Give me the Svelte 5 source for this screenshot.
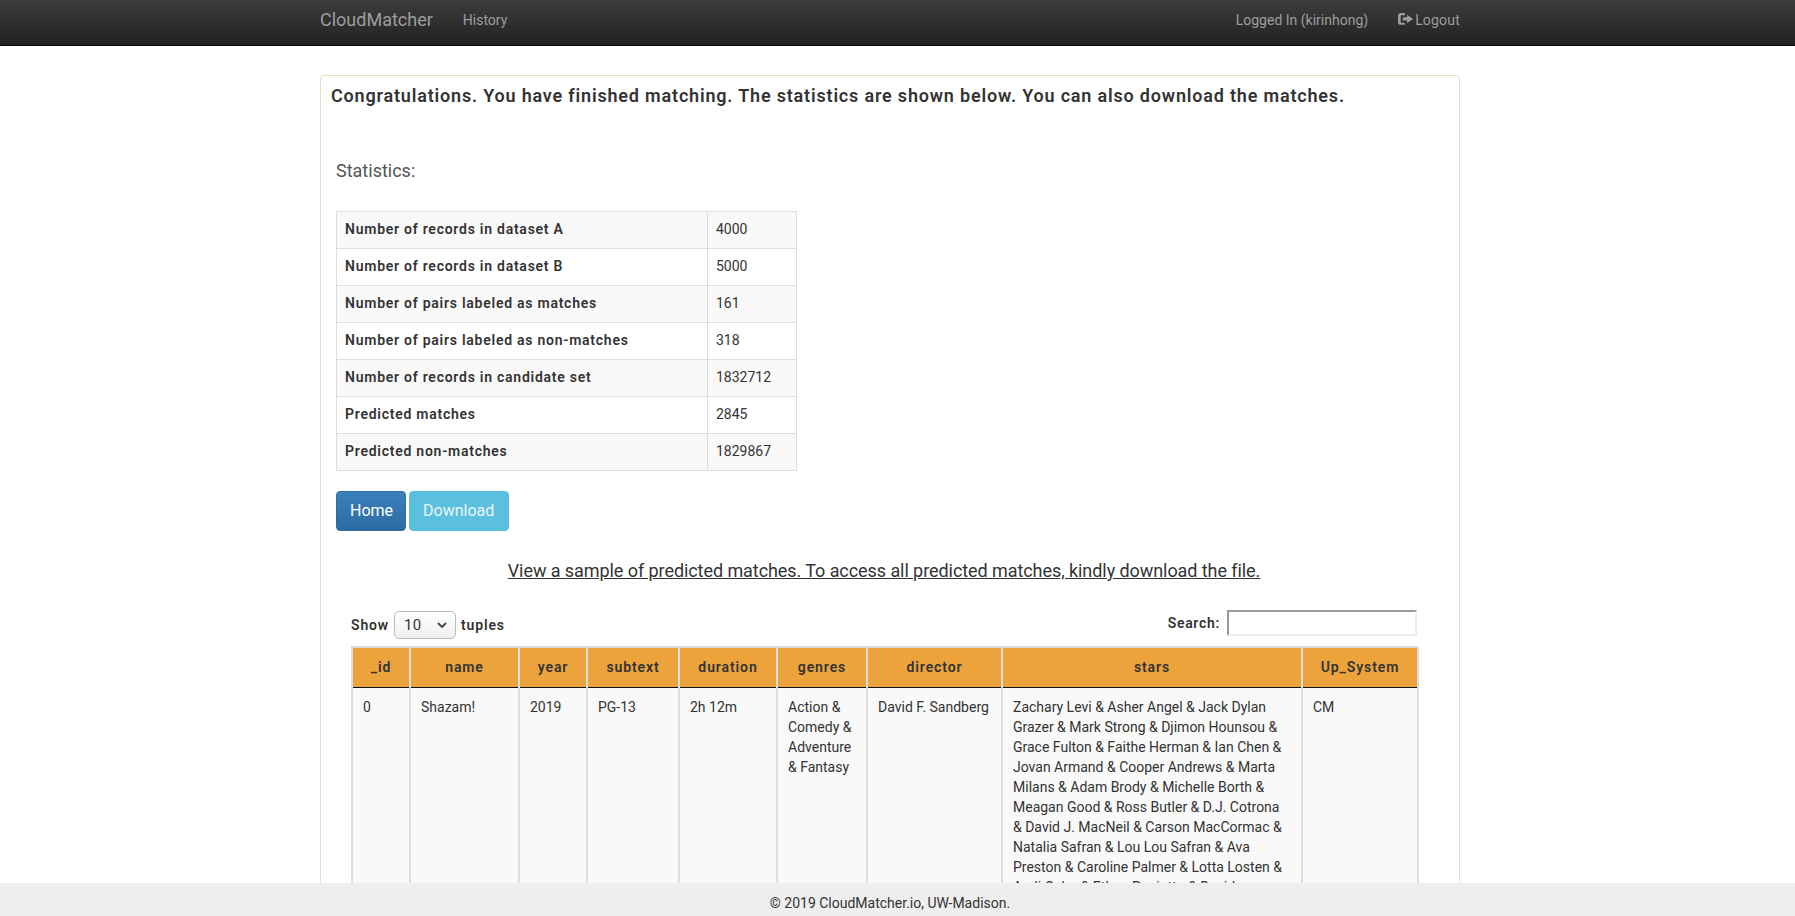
<script>
  const stats = [
    ['Number of records in dataset A', '4000'],
    ['Number of records in dataset B', '5000'],
    ['Number of pairs labeled as matches', '161'],
    ['Number of pairs labeled as non-matches', '318'],
    ['Number of records in candidate set', '1832712'],
    ['Predicted matches', '2845'],
    ['Predicted non-matches', '1829867']
  ];
  const cols = [
    ['_id', 58], ['name', 109], ['year', 68], ['subtext', 92], ['duration', 98],
    ['genres', 90], ['director', 135], ['stars', 300], ['Up_System', 116]
  ];
  const row = ['0', 'Shazam!', '2019', 'PG-13', '2h 12m', 'Action & Comedy & Adventure & Fantasy', 'David F. Sandberg',
    'Zachary Levi & Asher Angel & Jack Dylan Grazer & Mark Strong & Djimon Hounsou & Grace Fulton & Faithe Herman & Ian Chen & Jovan Armand & Cooper Andrews & Marta Milans & Adam Brody & Michelle Borth & Meagan Good & Ross Butler & D.J. Cotrona & David J. MacNeil & Carson MacCormac & Natalia Safran & Lou Lou Safran & Ava Preston & Caroline Palmer & Lotta Losten & Andi Osho & Ethan Pugiotto & David Kohlsmith',
    'CM'];
</script>

<div class="page">
  <nav class="navbar">
    <div class="nav-inner">
      <a class="brand" href="#top">CloudMatcher</a>
      <a class="link history" href="#top">History</a>
      <span class="spacer"></span>
      <a class="link user" href="#top">Logged In (kirinhong)</a>
      <a class="link logout" href="#top">
        <svg class="icon" viewBox="0 0 14 14" aria-hidden="true">
          <path fill="currentColor" d="M2.500 1H6.500V3H3.300C2.800 3 2.500 3.300 2.500 3.800V9.200C2.500 9.700 2.800 10 3.300 10H6.500V12H2.500C1.100 12 0 10.900 0 9.500V3.500C0 2.100 1.100 1 2.500 1Z"/>
          <path fill="currentColor" d="M4.500 5H8.500V2.500L14 6.500L8.500 10.500V8H4.500Z"/>
        </svg>Logout
      </a>
    </div>
  </nav>

  <main class="main">
    <div class="panel">
      <h1 class="title">Congratulations. You have finished matching. The statistics are shown below. You can also download the matches.</h1>
      <div class="body">
        <h2 class="sub">Statistics:</h2>
        <table class="stats">
          <tbody>
            {#each stats as s, i}
              <tr class:odd={i % 2 === 0}>
                <th>{s[0]}</th>
                <td>{s[1]}</td>
              </tr>
            {/each}
          </tbody>
        </table>
        <div class="buttons">
          <button class="btn primary">Home</button>
          <button class="btn info">Download</button>
        </div>
        <p class="sample"><u>View a sample of predicted matches. To access all predicted matches, kindly download the file.</u></p>
        <div class="tools">
          <label class="show">Show
            <select class="select"><option>10</option><option>25</option><option>50</option></select>
            tuples</label>
          <label class="search">Search:<input class="input" type="text" /></label>
        </div>
        <table class="data">
          <colgroup>
            {#each cols as c}<col style="width:{c[1]}px" />{/each}
          </colgroup>
          <thead>
            <tr>{#each cols as c}<th>{c[0]}</th>{/each}</tr>
          </thead>
          <tbody>
            <tr>{#each row as v}<td>{v}</td>{/each}</tr>
          </tbody>
        </table>
      </div>
    </div>
  </main>

  <footer class="footer">© 2019 CloudMatcher.io, UW-Madison.</footer>
</div>

<style>
  :global(html), :global(body) { margin: 0; height: 100%; overflow: hidden; }
  .page {
    height: 916px;
    display: flex;
    flex-direction: column;
    font-family: Roboto, "Liberation Sans", sans-serif;
    font-size: 14px;
    line-height: 20px;
    color: #333;
    background: #fff;
    overflow: hidden;
  }
  .navbar {
    flex: none;
    height: 45px;
    background: linear-gradient(to bottom, #3c3c3c, #222);
    border-bottom: 1px solid #080808;
  }
  .nav-inner {
    width: 1140px;
    margin-left: 320px;
    height: 40px;
    display: flex;
    align-items: center;
  }
  .brand { font-size: 18px; color: #9d9d9d; text-decoration: none; }
  .link { color: #9d9d9d; text-decoration: none; }
  .history { margin-left: 30px; }
  .spacer { flex: 1; }
  .user { margin-right: 2px; }
  .logout { margin-left: 28px; display: flex; align-items: center; letter-spacing: 0.2px; }
  .icon { width: 15px; height: 15px; margin-right: 2px; margin-top: -2px; }
  .main { flex: 1; min-height: 0; overflow: hidden; padding: 29px 0 0 320px; }
  .panel {
    width: 1138px;
    border: 1px solid #d6e9c6;
    border-radius: 4px;
    padding-bottom: 40px;
  }
  .title {
    margin: 0;
    padding: 10px 10px 0;
    font-size: 18px;
    line-height: 20px;
    font-weight: 600;
    letter-spacing: 0.815px;
  }
  .body { padding: 0 15px; }
  .sub {
    margin: 55px 0 0;
    font-size: 18px;
    line-height: 20px;
    font-weight: 400;
    color: #555;
  }
  .stats {
    margin-top: 30px;
    border-collapse: collapse;
    width: 461px;
    table-layout: fixed;
    background: #fff;
  }
  .stats tr.odd { background: #f9f9f9; }
  .stats th, .stats td {
    border: 1px solid #ddd;
    padding: 7px 8px 9px;
    text-align: left;
    height: 20px;
  }
  .stats th { width: 354px; font-weight: 600; letter-spacing: 0.75px; }
  .buttons { margin-top: 20px; display: flex; gap: 3px; }
  .btn {
    font: inherit;
    font-size: 16px;
    line-height: 22px;
    padding: 8px 13px;
    color: #fff;
    border-radius: 4px;
    border: 1px solid transparent;
  }
  .primary { background: linear-gradient(to bottom, #3a80bc, #2d6ca2); border-color: #2e6da4; padding-right: 12px; }
  .info { background: #5bc0de; border-color: #5bc0de; color: #eaf6fa; padding-right: 14px; }
  .sample {
    margin: 28px 12px 0 0;
    text-align: center;
    font-size: 18px;
    line-height: 24px;
    letter-spacing: -0.07px;
  }
  .tools {
    margin: 28px 0 0 15px;
    width: 1066px;
    height: 28px;
    display: flex;
    justify-content: space-between;
    align-items: center;
  }
  .show, .search { font-weight: 600; display: flex; align-items: center; }
  .show { letter-spacing: 0.85px; }
  .search { margin-bottom: 4px; letter-spacing: 0.7px; }
  .select {
    appearance: none;
    margin: 0 5px;
    width: 62px;
    height: 28px;
    font: inherit;
    font-size: 15px;
    font-weight: 400;
    letter-spacing: 0.3px;
    color: #333;
    padding: 0 9px;
    background: url("data:image/svg+xml,%3Csvg xmlns='http://www.w3.org/2000/svg' width='10' height='6'%3E%3Cpath d='M1 1l4 4 4-4' fill='none' stroke='%23444' stroke-width='1.800'/%3E%3C/svg%3E") no-repeat right 8px center, linear-gradient(#fff, #f0f0f0);
    border: 1px solid #bbb;
    border-radius: 5px;
  }
  .input {
    margin-left: 7px;
    width: 184px;
    height: 22px;
    padding: 0 1px;
    border-style: solid;
    border-width: 2px;
    border-color: #9a9a9a #eee #eee #9a9a9a;
  }
  .data {
    margin: 7px 0 0 15px;
    width: 1068px;
    table-layout: fixed;
    border-collapse: collapse;
  }
  .data th {
    background: #eda33c;
    border: 2px solid #ddd;
    border-bottom: 1px solid #111;
    padding: 9px 8px 10px;
    font-weight: 600;
    letter-spacing: 0.9px;
    text-align: center;
  }
  .data td {
    background: #f9f9f9;
    border: 2px solid #ddd;
    border-top: 0;
    padding: 9px 10px;
    vertical-align: top;
  }
  .footer {
    flex: none;
    height: 33px;
    box-sizing: border-box;
    padding: 10px 15px 0 0;
    background: #eee;
    text-align: center;
    line-height: 20px;
  }
</style>
